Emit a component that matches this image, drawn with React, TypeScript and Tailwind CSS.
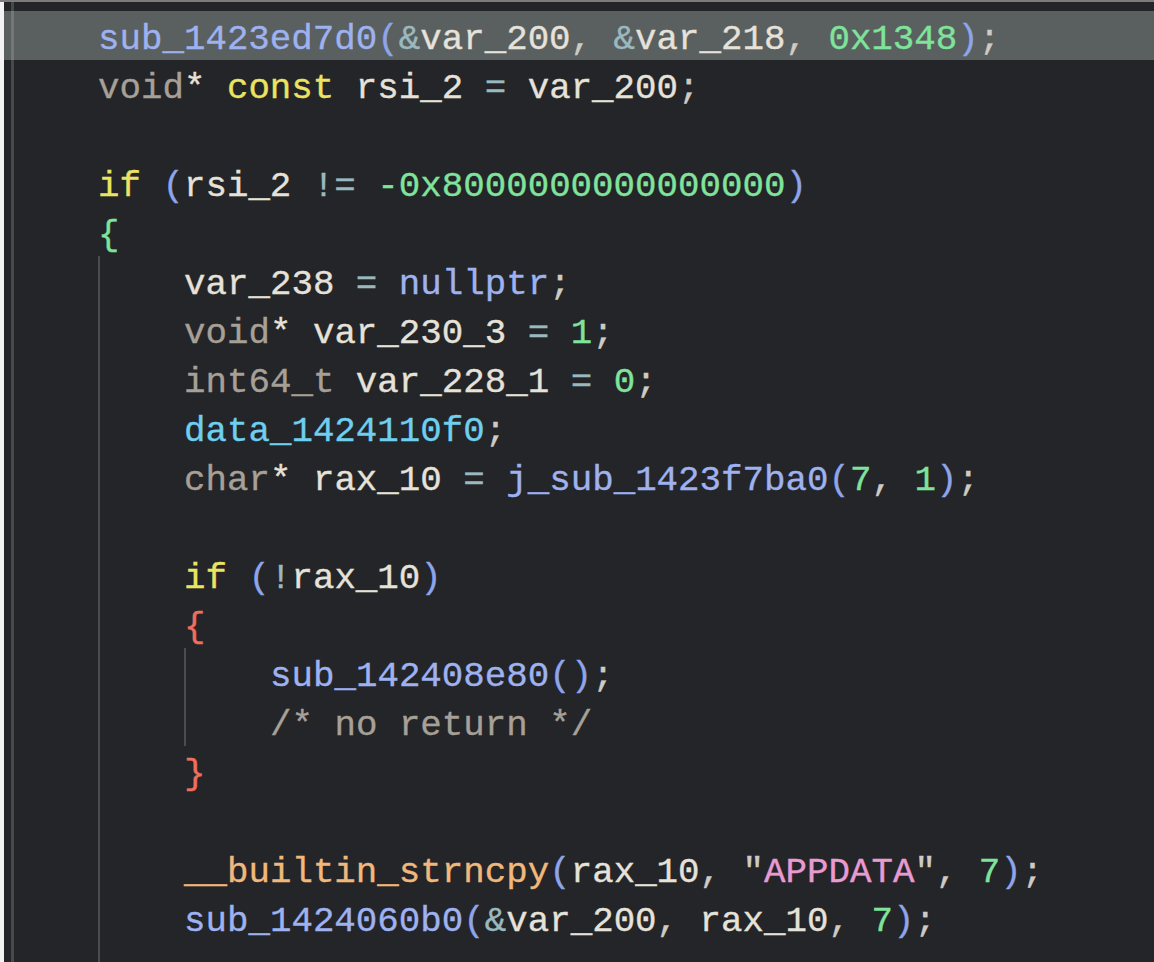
import React from "react"

type Tok = [string, string]

// token colours
const C = {
  txt: "text-[#e6e2da]",
  fn: "text-[#9fb2f0]",
  num: "text-[#7fe39c]",
  typ: "text-[#a7a097]",
  kw: "text-[#ebe362]",
  op: "text-[#9ab9bf]",
  par: "text-[#8fa5ea]",
  pun: "text-[#cfcbc4]",
  dat: "text-[#6fcfee]",
  bi: "text-[#f1b87b]",
  str: "text-[#e89bd2]",
  red: "text-[#ef6f5f]",
  com: "text-[#a7a097]",
}

type Line = {
  guides: number
  toks: Tok[]
  hl?: boolean
}

const lines: Line[] = [
  {
    guides: 0, hl: true, toks: [
      ["sub_1423ed7d0", C.fn], ["(", C.par], ["&", C.op], ["var_200", C.txt], [", ", C.pun],
      ["&", C.op], ["var_218", C.txt], [", ", C.pun], ["0x1348", C.num], [")", C.par], [";", C.pun],
    ]
  },
  {
    guides: 0, toks: [
      ["void", C.typ], ["* ", C.txt], ["const", C.kw], [" rsi_2 ", C.txt], ["=", C.op], [" var_200", C.txt], [";", C.pun],
    ]
  },
  { guides: 0, toks: [] },
  {
    guides: 0, toks: [
      ["if", C.kw], [" ", C.txt], ["(", C.par], ["rsi_2 ", C.txt], ["!=", C.op], [" ", C.txt],
      ["-0x8000000000000000", C.num], [")", C.par],
    ]
  },
  { guides: 0, toks: [["{", C.num]] },
  {
    guides: 1, toks: [
      ["var_238 ", C.txt], ["=", C.op], [" ", C.txt], ["nullptr", C.fn], [";", C.pun],
    ]
  },
  {
    guides: 1, toks: [
      ["void", C.typ], ["* var_230_3 ", C.txt], ["=", C.op], [" ", C.txt], ["1", C.num], [";", C.pun],
    ]
  },
  {
    guides: 1, toks: [
      ["int64_t", C.typ], [" var_228_1 ", C.txt], ["=", C.op], [" ", C.txt], ["0", C.num], [";", C.pun],
    ]
  },
  { guides: 1, toks: [["data_1424110f0", C.dat], [";", C.pun]] },
  {
    guides: 1, toks: [
      ["char", C.typ], ["* rax_10 ", C.txt], ["=", C.op], [" ", C.txt], ["j_sub_1423f7ba0", C.fn], ["(", C.par],
      ["7", C.num], [", ", C.pun], ["1", C.num], [")", C.par], [";", C.pun],
    ]
  },
  { guides: 1, toks: [] },
  {
    guides: 1, toks: [
      ["if", C.kw], [" ", C.txt], ["(", C.par], ["!", C.op], ["rax_10", C.txt], [")", C.par],
    ]
  },
  { guides: 1, toks: [["{", C.red]] },
  { guides: 2, toks: [["sub_142408e80", C.fn], ["()", C.par], [";", C.pun]] },
  { guides: 2, toks: [["/* no return */", C.com]] },
  { guides: 1, toks: [["}", C.red]] },
  { guides: 1, toks: [] },
  {
    guides: 1, toks: [
      ["__builtin_strncpy", C.bi], ["(", C.par], ["rax_10", C.txt], [", ", C.pun], ["\"", C.pun],
      ["APPDATA", C.str], ["\"", C.pun], [", ", C.pun], ["7", C.num], [")", C.par], [";", C.pun],
    ]
  },
  {
    guides: 1, toks: [
      ["sub_1424060b0", C.fn], ["(", C.par], ["&", C.op], ["var_200", C.txt], [", ", C.pun],
      ["rax_10", C.txt], [", ", C.pun], ["7", C.num], [")", C.par], [";", C.pun],
    ]
  },
  { guides: 1, toks: [] },
]

const Row = ({ line }: { line: Line }) => {
  return (
    <div className={`flex h-[49px] shrink-0 ${line.hl ? "bg-[#5a605f]" : ""}`}>
      <div className="w-[4px] bg-[#f3f3f3]" />
      <div className="w-[7px]" />
      <div className={`w-[3px] ${line.hl ? "bg-[#737877]" : "bg-[#48494b]"}`} />
      <div className="w-[84px]" />
      {Array.from({ length: line.guides }).map((_, i) => (
        <div key={i} className="w-[86px] border-l-2 border-[#4b4c4e]" />
      ))}
      <div className="flex items-center pt-[9px] whitespace-pre">
        {line.toks.map((t, i) => (
          <span key={i} className={t[1]}>{t[0]}</span>
        ))}
      </div>
    </div>
  )
}

export default function App() {
  return (
    <div className="flex h-[962px] w-[1154px] flex-col overflow-hidden bg-[#242528] text-[35.8px] leading-[44px] [-webkit-text-stroke:0.35px_currentColor] [font-family:'Liberation_Mono','DejaVu_Sans_Mono',monospace]">
      <div className="h-[2px] shrink-0 bg-[#7b7c7c]" />
      <div className="flex h-[9px] shrink-0">
        <div className="w-[4px] bg-[#f3f3f3]" />
        <div className="w-[7px]" />
        <div className="w-[3px] bg-[#48494b]" />
      </div>
      {lines.map((l, i) => (
        <Row key={i} line={l} />
      ))}
    </div>
  )
}
